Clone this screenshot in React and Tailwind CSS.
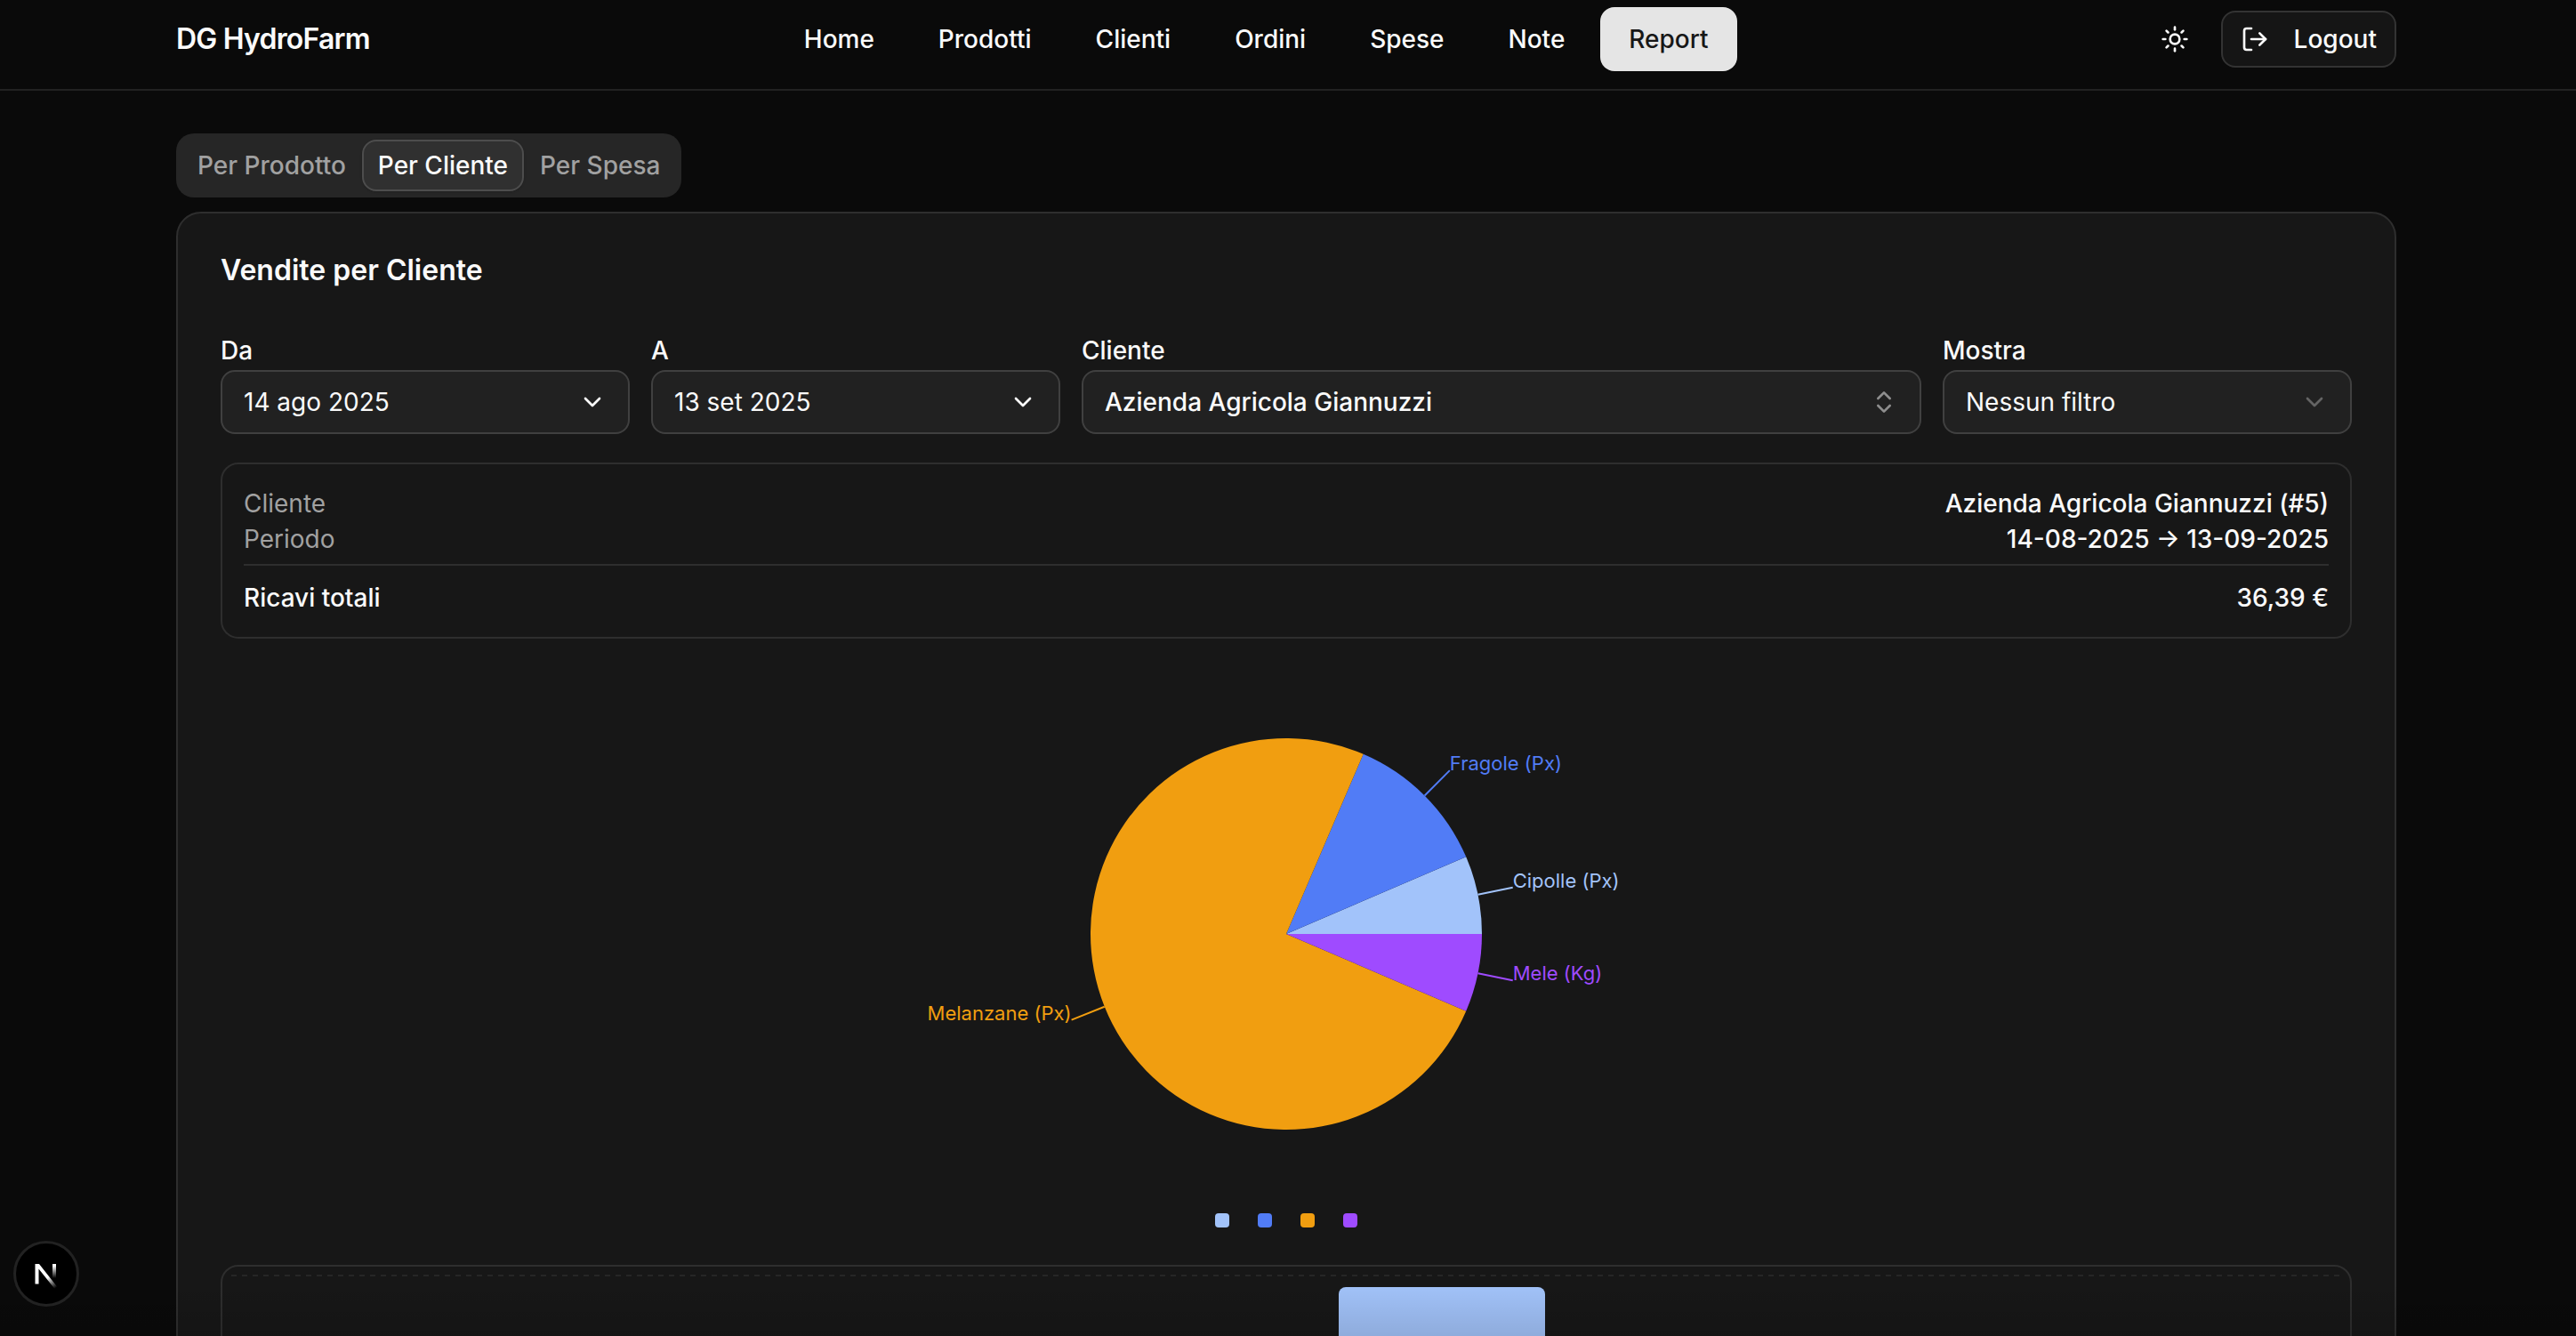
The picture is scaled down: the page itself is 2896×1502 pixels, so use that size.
import { Sun, LogOut, ChevronDown, ChevronsUpDown } from "lucide-react";

const navItems = ["Home", "Prodotti", "Clienti", "Ordini", "Spese", "Note", "Report"];
const tabs = ["Per Prodotto", "Per Cliente", "Per Spesa"];

const slices = [
  { label: "Cipolle (Px)", color: "#a2c3fa", from: 0, to: 23.2 },
  { label: "Fragole (Px)", color: "#517cf6", from: 23.2, to: 66.8 },
  { label: "Melanzane (Px)", color: "#f19e10", from: 66.8, to: 336.8 },
  { label: "Mele (Kg)", color: "#9f4bff", from: 336.8, to: 360 },
];

const CX = 500;
const CY = 260;
const R = 220;

function polar(r, deg) {
  const a = (deg * Math.PI) / 180;
  return [CX + r * Math.cos(a), CY - r * Math.sin(a)];
}

function PieChart() {
  return (
    <svg viewBox="0 0 1000 520" className="h-[520px] w-[1000px]" role="img" aria-label="Vendite per prodotto">
      {slices.map((s) => {
        const [x1, y1] = polar(R, s.from);
        const [x2, y2] = polar(R, s.to);
        const mid = (s.from + s.to) / 2;
        const [lx1, ly1] = polar(R, mid);
        const [lx2, ly2] = polar(R + 40, mid);
        const large = s.to - s.from > 180 ? 1 : 0;
        return (
          <g key={s.label}>
            <path d={`M${CX} ${CY}L${x1} ${y1}A${R} ${R} 0 ${large} 0 ${x2} ${y2}Z`} fill={s.color} />
            <path d={`M${lx1} ${ly1}L${lx2} ${ly2}`} stroke={s.color} strokeWidth="2" />
            <text
              x={lx2}
              y={ly2}
              fill={s.color}
              textAnchor={lx2 > CX ? "start" : "end"}
              className="text-[22px]"
            >
              {s.label}
            </text>
          </g>
        );
      })}
    </svg>
  );
}

const fieldBox =
  "flex h-[72px] w-full items-center justify-between rounded-2xl border-2 border-[#404040] bg-[#212121] px-6 text-left";

function Field({ id, label, value, wide, icon, bold }) {
  return (
    <div className={wide ? "col-span-2 flex flex-col gap-2" : "flex flex-col gap-2"}>
      <label htmlFor={id} className="leading-7 font-medium">
        {label}
      </label>
      <button id={id} type="button" className={fieldBox}>
        <span className={bold ? "font-medium" : "font-normal"}>{value}</span>
        {icon}
      </button>
    </div>
  );
}

function NextBadge() {
  return (
    <button
      type="button"
      aria-label="Open Next.js Dev Tools"
      className="absolute bottom-[33px] left-[15px] flex size-[74px] items-center justify-center rounded-full border-3 border-[#222222] bg-black"
    >
      <svg viewBox="0 0 28 34" className="h-[34px] w-7" fill="none">
        <defs>
          <linearGradient id="diag" x1="17" y1="20" x2="26" y2="32" gradientUnits="userSpaceOnUse">
            <stop stopColor="#fff" />
            <stop offset="1" stopColor="#fff" stopOpacity="0" />
          </linearGradient>
          <linearGradient id="stem" x1="23" y1="8" x2="23" y2="22" gradientUnits="userSpaceOnUse">
            <stop stopColor="#fff" />
            <stop offset="1" stopColor="#fff" stopOpacity="0" />
          </linearGradient>
        </defs>
        <path d="M1.5 28.5V6H6L26.5 32L23.5 34L5.5 11.5V28.5Z" fill="url(#diag)" />
        <path d="M21 6h4v16h-4z" fill="url(#stem)" />
      </svg>
    </button>
  );
}

export default function App() {
  return (
    <div className="relative h-screen overflow-hidden bg-[#0a0a0a] font-['Inter',sans-serif] text-[28px] text-[#fafafa]">
      <header className="border-b-2 border-[#222222] pr-1 pb-3">
        <div className="mx-auto flex h-[88px] max-w-[2496px] items-center justify-between">
          <a href="#" className="text-[32px] leading-10 font-semibold tracking-tight">
            DG HydroFarm
          </a>
          <nav className="flex gap-2">
            {navItems.map((item) => (
              <a
                key={item}
                href="#"
                className={
                  item === "Report"
                    ? "flex h-[72px] items-center rounded-2xl bg-[#e5e5e5] px-8 font-medium text-[#171717]"
                    : "flex h-[72px] items-center rounded-2xl px-8 font-medium"
                }
              >
                {item}
              </a>
            ))}
          </nav>
          <div className="flex items-center gap-4">
            <button type="button" aria-label="Tema" className="flex size-[72px] items-center justify-center">
              <Sun className="size-8" />
            </button>
            <button
              type="button"
              className="flex h-16 items-center gap-7 rounded-2xl border-2 border-[#333333] bg-[#151515] px-5 font-medium"
            >
              <LogOut className="size-8" />
              Logout
            </button>
          </div>
        </div>
      </header>

      <main className="pt-12 pr-1">
        <div className="mx-auto flex max-w-[2496px] flex-col items-start gap-4">
          <div role="tablist" className="flex h-[72px] items-center rounded-[20px] bg-[#262626] px-1.5">
            {tabs.map((t) => (
              <button
                key={t}
                type="button"
                role="tab"
                aria-selected={t === "Per Cliente"}
                className={
                  t === "Per Cliente"
                    ? "flex h-[58px] items-center rounded-2xl border-2 border-[#4d4d4d] bg-[#303030] px-4 font-medium shadow-sm"
                    : "flex h-[58px] items-center rounded-2xl border-2 border-transparent px-4 font-medium text-[#a1a1a1]"
                }
              >
                {t}
              </button>
            ))}
          </div>

          <section className="w-full rounded-[28px] border-2 border-[#2e2e2e] bg-[#171717] p-12">
            <h1 className="text-[32px] leading-8 font-semibold">Vendite per Cliente</h1>

            <div className="mt-15 grid grid-cols-5 gap-6">
              <Field id="da" label="Da" value="14 ago 2025" icon={<ChevronDown className="size-8" />} />
              <Field id="a" label="A" value="13 set 2025" icon={<ChevronDown className="size-8" />} />
              <Field
                id="cliente"
                label="Cliente"
                value="Azienda Agricola Giannuzzi"
                wide
                bold
                icon={<ChevronsUpDown className="size-8 text-[#8e8e8e]" />}
              />
              <Field
                id="mostra"
                label="Mostra"
                value="Nessun filtro"
                icon={<ChevronDown className="size-8 text-[#646464]" />}
              />
            </div>

            <dl className="mt-8 rounded-[20px] border-2 border-[#2e2e2e] p-6 leading-10">
              <div className="flex justify-between">
                <dt className="text-[#a1a1a1]">Cliente</dt>
                <dd className="font-medium">Azienda Agricola Giannuzzi (#5)</dd>
              </div>
              <div className="flex justify-between">
                <dt className="text-[#a1a1a1]">Periodo</dt>
                <dd className="font-medium">14-08-2025 → 13-09-2025</dd>
              </div>
              <div className="mt-2 flex justify-between border-t-2 border-[#2e2e2e] pt-4 font-medium">
                <dt>Ricavi totali</dt>
                <dd>36,39 €</dd>
              </div>
            </dl>

            <div className="mt-18 flex flex-col items-center">
              <PieChart />
              <div className="mt-[54px] flex gap-8">
                {slices.map((s) => (
                  <span key={s.label} className="size-4 rounded-sm" style={{ backgroundColor: s.color }} />
                ))}
              </div>
            </div>

            <div className="mt-[42px] h-[520px] rounded-[20px] border-2 border-[#2e2e2e] px-2.5 pt-[9px]">
              <svg className="block h-0.5 w-full">
                <line x1="0" y1="1" x2="100%" y2="1" stroke="#262626" strokeWidth="2" strokeDasharray="6 6" />
              </svg>
              <div className="mt-3 flex pl-[52.5%]">
                <div className="h-[440px] w-[232px] rounded-t-lg bg-[#a2c3fa]" />
              </div>
            </div>
          </section>
        </div>
      </main>

      <div className="pointer-events-none absolute inset-x-0 bottom-0 h-[60px] bg-linear-to-b from-transparent to-black/12" />
      <NextBadge />
    </div>
  );
}
